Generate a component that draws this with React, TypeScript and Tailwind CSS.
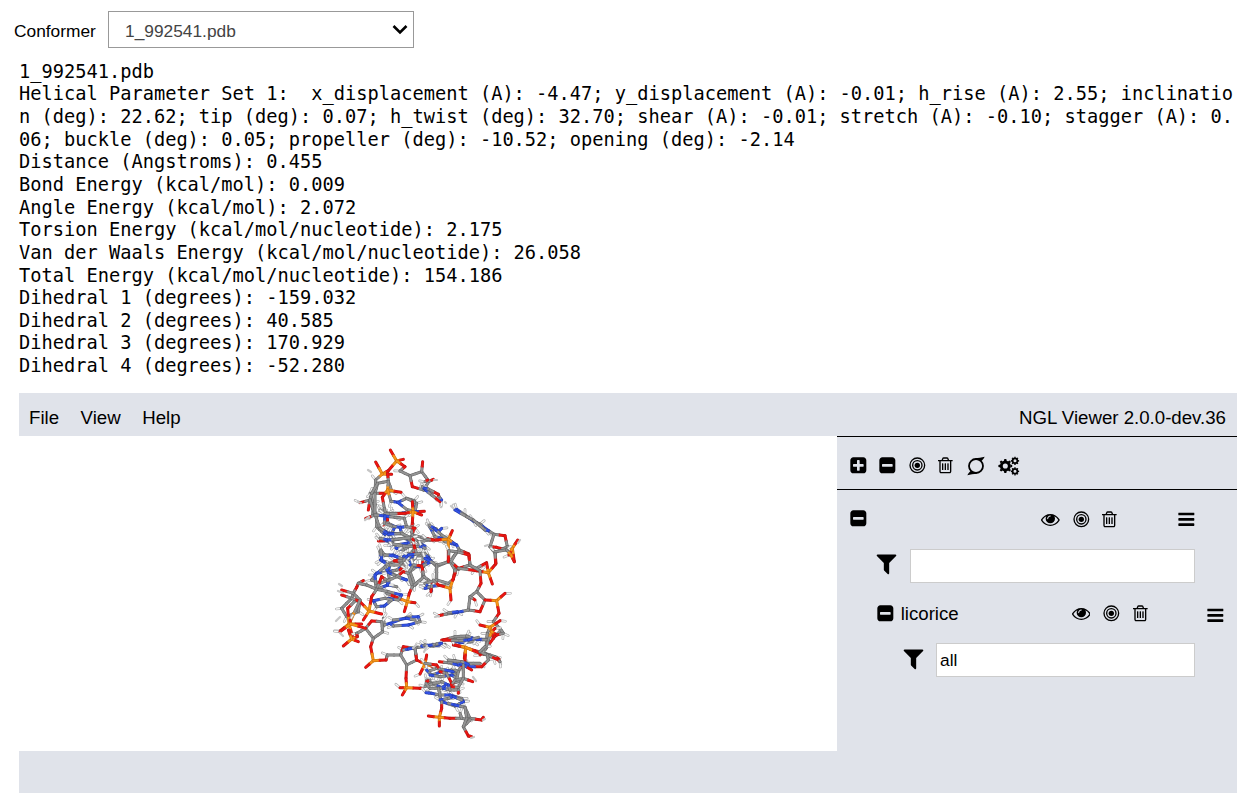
import type { ReactNode } from "react";

type Atom = { e: string; x: number; y: number };
type Group = { ox: number; oy: number; chains: string };

// Stick model fragments: each chain is a run of bonded atoms, three units per pixel.
const GROUPS: Group[] = [
  { ox: 360, oy: 490, chains: `C50,110 C65,125 N75,133 C95,130 N105,110 C85,100 C75,75;N85,133 C100,150 C95,160 N90,165;O55,153 C80,152 C100,150 C130,145 N150,150 C155,165 C130,180 N110,175 C80,152;C130,145 C155,140 C175,155 N195,170;C155,140 O162,115;N155,165 C185,165 C200,190 N210,210;C175,155 C210,150 O240,150;C60,185 N62,210 C90,220 C120,205 N100,195 C75,195 C60,185;C90,220 N85,245 C110,240 N125,230;C120,205 N150,218 C165,205 C145,190 N130,200;O103,212 C130,218 N155,200 C180,195 N205,208 C190,230 N160,225;C150,245 C170,230 O187,230 C188,265 C165,285 C150,245;C190,200 O187,230;C35,270 N50,250 C85,245 C88,268 C60,280 C35,270;C85,245 C115,260 N140,270;C88,268 N85,285 C110,290;O120,240 C140,215 C160,180 O165,195;C30,40 C50,75 C50,110;C70,75 C95,70 C120,70 N135,68;C30,10 C40,40 C38,75;C60,60 C85,70 O70,105` },
  { ox: 325, oy: 530, chains: `C165,-4 N195,10 C235,12 C258,35 N245,40 C210,45 N190,32 O165,32;N190,32 C205,42 C235,48 C270,50 N300,48;C258,-4 C262,15 C290,22 O325,30;C262,15 O268,50 C275,70;C168,60 C178,75 N210,78 C235,88 C225,105 C190,105 N170,92 C168,60;O207,92 C235,92 N250,75 C290,70 C310,95 N285,110 N255,105;C300,70 N318,95 C290,110;C250,130 C265,105 O290,108 C297,140 C262,170 C250,130;C297,140 C310,150 O325,160;N300,175 C315,172 N320,182;C262,170 O253,190 P247,215;P247,215 O205,198 C185,190;P247,215 O238,245;P247,215 O270,218;N150,135 C180,110 N190,127 C215,140 N245,150;N188,165 C155,178 C152,160 N150,135;C155,178 O170,140 C188,152 N188,165;C188,152 C215,140 O235,125 C250,130;C155,178 C190,185 N230,195 C220,210 N190,205;N145,212 C155,230 N178,228 C200,210 C180,205 N145,212;O115,152 C100,160 O95,172 C85,190 C80,205 C50,235 C65,260 C100,245 C105,210 C85,190;O50,180 C85,190;C100,160 C125,165 C155,178;O50,195 C80,205 O105,215 P132,243;P132,243 O140,200 C155,178;P132,243 O170,252;P132,243 O115,270;P72,282 O68,235 C88,215;P72,282 O110,282;P72,282 O45,303;P72,282 C105,210;P72,282 O82,318;C175,265 C178,285 N195,280 C245,262 N280,260 C285,275 N250,285 C205,288 N195,280;C205,270 N245,265 C270,270` },
  { ox: 325, oy: 440, chains: `O196,30 P215,63 O190,92 P172,102;P215,63 O235,58;P215,63 O240,80 C225,93 C255,107;C255,107 C290,95 C312,124 C296,150 O262,140 C255,107;C290,95 O293,65;C312,124 O325,118;C296,150 N310,152 C330,165;O152,66 P172,102 O200,103;P172,102 C152,120 C150,160 O178,160 C200,152 C190,124 C158,130 C150,160;C190,124 O188,100;P188,150 O228,157;P188,150 C190,124;P188,150 O172,172 C178,205 O188,240;P188,150 C198,184 N218,187;O105,188 C135,180 C140,160 C158,130;C135,180 O130,210;C135,180 C150,225 O122,235;C150,160 C150,225 C165,265 C195,285;N218,187 C245,175 C268,182 N270,215 C245,208 N218,187;C245,175 C275,190 C270,215;N270,215 O298,214;P264,215 O262,185;P264,215 O240,220 C190,222 C178,222;P264,215 O290,225;P264,215 O262,250 C260,265;C150,225 N180,228 C210,232 C238,235 C245,260 N225,262 C200,258 C178,250 N180,228;O270,265 C245,260;C165,265 N190,283 C230,280 N225,262;C230,280 C260,295;C165,295 N190,300 C210,298 C260,293 O265,300;N320,262 C335,267` },
  { ox: 425, oy: 440, chains: `C-8,140 N0,148 C20,165 O45,185;C0,125 O8,120;N50,180 C42,170 O40,163 C10,147 N0,145;N95,208 C120,225 N145,243 C165,252 N180,265 C207,283;N90,210 C125,230 C145,240 C180,270 N190,272;C207,283 O240,287 C247,320 C210,338 C195,320 C207,283;C195,320 O215,322 C247,330;C210,338 O213,370;C247,320 P262,325 O278,300;P262,325 O268,365;P262,325 O252,345;N15,262 C30,290 N50,295 C60,305 N95,315;N50,265 N40,275 C15,262;C12,255 N28,265 C50,285 C80,305;P70,298 O82,272;P70,298 O25,300 C5,298;P70,298 O70,365;P70,298 N95,315 C103,330 O131,342 C135,375 C100,388 C75,362 C103,330;O185,368 C150,387 C135,375;C0,340 N10,355 C35,380 C75,362;N-10,320 C0,325` },
  { ox: 425, oy: 550, chains: `N0,25 C35,45 C75,35 C90,60 O85,88 C70,100 C35,90 C35,45;C35,90 C0,100 N10,110 C60,105;N0,115 C20,108 O18,125;C78,35 O100,55 C135,45 O132,15 C95,5 C78,35;C95,5 C72,2 O70,35;P190,68 O212,42 C210,5 C245,0 P258,15 O268,35;P190,68 O202,102;P190,68 O185,40;P190,68 O155,62 C100,55;C135,45 C165,62 O168,100 C155,125 C180,150 O165,185 C130,180 C135,140 C155,125;P215,152 O240,130;P215,152 O180,150;P215,152 O222,190 C205,215 C228,240;P75,115 O90,70 C90,60;P75,115 O78,150;P75,115 O40,105 C25,90;C130,180 N97,187 C65,192 O42,197;C70,188 N97,185;O150,150 C135,140;P195,232 O165,225;P195,232 O225,212;P195,232 O205,265 C228,240 C235,250;P195,232 C187,250 C185,268;O50,270 C90,268 C125,262 N150,268 C185,268;C85,275 N100,275 C130,272 C150,267;C90,268 N105,278 C145,275;P122,293 O85,285;P122,293 O118,325;P122,293 O150,302 C180,310 C210,320 O222,327;C185,268 C183,295 O205,265;C183,295 O165,315;N0,290 C25,288 N40,285 C60,283;C180,310 C205,325` },
  { ox: 330, oy: 620, chains: `C107,25 O125,3 C155,5 C158,35 C130,55 C107,25;C107,25 C80,40 O82,50 P65,57;P62,12 O60,0;P62,12 O30,35;P62,12 O107,25;P65,57 O40,78;P65,57 O85,65;P65,57 O55,30;C130,55 O122,80 P130,122 O107,142;P130,122 O168,120 C172,105 C212,105;C212,105 O220,80 C255,85 C260,120 C230,135 C212,105;C220,90 N235,87 C265,82 N285,77 C305,76 N330,73;C230,135 O228,175 P230,203 O210,203;P230,203 O217,225;P230,203 O270,205 C290,195;P285,132 O260,120 C255,85;P285,132 O290,105;P285,132 O270,162;P285,132 O325,145 C340,155` },
  { ox: 400, oy: 630, chains: `O130,30 C165,20 C200,18 N230,28 C265,30 C255,60;O130,30 C180,32 N205,30 C235,22;N65,48 C75,45 N90,46 C110,42 N125,40;P197,52 O165,45;P197,52 O195,95 C170,130;P197,52 O240,70 C262,75 O295,90 C300,95;C262,75 C240,65 C255,50;C265,30 P275,5 O285,-5;P275,5 O290,15 C310,10;C262,75 C265,90 O245,110 N205,110;O118,95 C145,98 N175,105 C200,100 C240,100;C145,98 C165,92 N190,105 O215,120;C145,90 C185,95 N205,103;N80,120 C95,135 N125,125 C155,120 C170,140;N90,135 C120,140 N155,135 C170,145;C90,122 C110,115 N160,125;C120,120 O110,105 C75,100;O120,125 C140,130 O155,160 C175,155;C165,120 C175,125 C170,150 C190,145 O218,155;C190,145 C190,105;C190,145 C175,172 O150,170 C165,150;C80,150 C95,160 N130,175 C150,180 C175,180 O175,190;C75,170 C100,160 C125,155 N145,165 C150,180;C90,150 O80,155;C78,160 C90,175 C120,175 N135,168;N78,188 N95,190 C120,195 N150,195 C185,205 N190,215 C165,228 N125,215 C118,195;C115,175 C120,195;N120,210 C145,205 N160,200 C185,210;C145,220 N165,225 C195,232;C125,215 O125,235 P118,262 O85,258;P118,262 O118,288;P118,262 O150,265 C185,265;C195,232 C210,265 O245,270 O250,262;C185,265 C210,270 C190,290 O205,318 O215,320;C195,232 C200,265 C190,290;C185,265 C180,250` },
];

const COLORS: Record<string, string> = { C: "#949494", N: "#3252e6", O: "#ee1511", P: "#f8961a" };
const SHADES: Record<string, string> = { C: "#666666", N: "#233aa8", O: "#b51613", P: "#c8720f" };

const mix = (a: Atom, b: Atom) => ({ x: (a.x + b.x) / 2, y: (a.y + b.y) / 2 });

function parse(group: Group): Atom[][] {
  return group.chains.split(";").map((chain) =>
    chain.trim().split(/\s+/).map((t) => {
      const [x, y] = t.slice(1).split(",").map(Number);
      return { e: t[0], x: group.ox + x / 3, y: group.oy + y / 3 };
    }),
  );
}

function buildSticks(group: Group) {
  const links: [Atom, Atom][] = [];
  const near = new Map<string, { atom: Atom; to: Atom[] }>();
  const touch = (a: Atom, b: Atom) => {
    const key = `${a.x},${a.y}`;
    if (!near.has(key)) near.set(key, { atom: a, to: [] });
    near.get(key)!.to.push(b);
  };
  parse(group).forEach((chain) =>
    chain.slice(1).forEach((b, i) => {
      links.push([chain[i], b]);
      touch(chain[i], b);
      touch(b, chain[i]);
    }),
  );
  const hydrogens: [Atom, { x: number; y: number }][] = [];
  near.forEach(({ atom, to }) => {
    if (atom.e === "P" || to.length > 2 || (atom.e === "O" && to.length > 1)) return;
    if (atom.e === "O" && Math.round(atom.x * 3) % 3 !== 0) return;
    const cx = to.reduce((s, t) => s + t.x, 0) / to.length;
    const cy = to.reduce((s, t) => s + t.y, 0) / to.length;
    const angle = Math.atan2(atom.y - cy, atom.x - cx) + (to.length === 1 ? 0.7 : 0);
    hydrogens.push([atom, { x: atom.x + Math.cos(angle) * 5.4, y: atom.y + Math.sin(angle) * 5.4 }]);
  });
  return { links, hydrogens };
}

function Molecule() {
  return (
    <svg className="block h-[315px] w-[818px]" viewBox="19 436 818 315" fill="none" strokeLinecap="round">
      {GROUPS.map((group, g) => {
        const { links, hydrogens } = buildSticks(group);
        return (
          <g key={g}>
            {hydrogens.map(([a, h], i) => (
              <g key={i}>
                <path d={`M${a.x} ${a.y}L${h.x} ${h.y}`} stroke="#a8a8a8" strokeWidth="2.6" />
                <path d={`M${a.x} ${a.y}L${h.x} ${h.y}`} stroke="#f8f8f8" strokeWidth="1.4" />
              </g>
            ))}
            {links.map(([a, b], i) => {
              const m = mix(a, b);
              const first = `M${a.x} ${a.y}L${m.x} ${m.y}`;
              const second = `M${m.x} ${m.y}L${b.x} ${b.y}`;
              return (
                <g key={i}>
                  <path d={first} stroke={SHADES[a.e]} strokeWidth="3" />
                  <path d={second} stroke={SHADES[b.e]} strokeWidth="3" />
                  <path d={first} stroke={COLORS[a.e]} strokeWidth="1.9" />
                  <path d={second} stroke={COLORS[b.e]} strokeWidth="1.9" />
                </g>
              );
            })}
          </g>
        );
      })}
      <g stroke="#c6c6c6" strokeWidth="2.2">
        <path d="M445 502l1 1M451 506l2 2M434 480h3M485 546l3-1M361 503l-3-1M338 591l5 2M336 621l4-4M435 617l4-1M483 720l2-1M340 633l3 3" />
        <path d="M413 648l3-3M424 652l3-6M476 681l-3-4M365 520l4-3M518 543l2-3M371 472l-3-2M342 586l-3-2M471 738l3-1" />
      </g>
    </svg>
  );
}

const SQUARE =
  "m256-544v960q0 119-84.5 203.5t-203.5 84.5h-960q-119 0-203.5-84.5t-84.5-203.5v-960q0-119 84.5-203.5t203.5-84.5h960q119 0 203.5 84.5t84.5 203.5z";

function Glyph({ children, large = false }: { children: ReactNode; large?: boolean }) {
  return (
    <svg viewBox="0 0 1792 1792" fill="#000" className={large ? "block h-[25px] w-[25px] shrink-0" : "block h-[18.67px] w-[18.67px] shrink-0"}>
      {children}
    </svg>
  );
}

const Plus = () => (
  <Glyph>
    <path d={`M1408 960v-128q0-26-19-45t-45-19h-320v-320q0-26-19-45t-45-19h-128q-26 0-45 19t-19 45v320h-320q-26 0-45 19t-19 45v128q0 26 19 45t45 19h320v320q0 26 19 45t45 19h128q26 0 45-19t19-45v-320h320q26 0 45-19t19-45z${SQUARE}`} />
  </Glyph>
);
const Minus = () => (
  <Glyph>
    <path d={`M1408 960v-128q0-26-19-45t-45-19h-896q-26 0-45 19t-19 45v128q0 26 19 45t45 19h896q26 0 45-19t19-45z${SQUARE}`} />
  </Glyph>
);
const Target = () => (
  <Glyph>
    <circle cx="896" cy="896" r="256" />
    <circle cx="896" cy="896" r="448" fill="none" stroke="#000" strokeWidth="128" />
    <circle cx="896" cy="896" r="704" fill="none" stroke="#000" strokeWidth="128" />
  </Glyph>
);
const Trash = () => (
  <Glyph>
    <path d="M704 736v576q0 14-9 23t-23 9h-64q-14 0-23-9t-9-23v-576q0-14 9-23t23-9h64q14 0 23 9t9 23zm256 0v576q0 14-9 23t-23 9h-64q-14 0-23-9t-9-23v-576q0-14 9-23t23-9h64q14 0 23 9t9 23zm256 0v576q0 14-9 23t-23 9h-64q-14 0-23-9t-9-23v-576q0-14 9-23t23-9h64q14 0 23 9t9 23zm128 724v-948h-896v948q0 22 7 40.5t14.5 27 10.5 8.5h832q3 0 10.5-8.5t14.5-27 7-40.5zm-672-1076h448l-48-117q-7-9-17-11h-317q-10 2-17 11zm928 32v64q0 14-9 23t-23 9h-96v948q0 83-47 143.5t-113 60.5h-832q-66 0-113-58.5t-47-141.5v-952h-96q-14 0-23-9t-9-23v-64q0-14 9-23t23-9h309l70-167q15-37 54-63t79-26h320q40 0 79 26t54 63l70 167h309q14 0 23 9t9 23z" />
  </Glyph>
);
const Eye = () => (
  <Glyph>
    <path d="M1664 960q-152-236-381-353 61 104 61 225 0 185-131.5 316.5t-316.5 131.5-316.5-131.5-131.5-316.5q0-121 61-225-229 117-381 353 133 205 333.5 326.5t434.5 121.5 434.5-121.5 333.5-326.5zm-720-384q0-20-14-34t-34-14q-125 0-214.5 89.5t-89.5 214.5q0 20 14 34t34 14 34-14 14-34q0-86 61-147t147-61q20 0 34-14t14-34zm848 384q0 34-20 69-140 230-376.5 368.5t-499.5 138.5-499.5-139-376.5-368q-20-35-20-69t20-69q140-229 376.5-368t499.5-139 499.5 139 376.5 368q20 35 20 69z" />
  </Glyph>
);
const Bars = () => (
  <Glyph>
    <path d="M1664 1344v128q0 26-19 45t-45 19h-1408q-26 0-45-19t-19-45v-128q0-26 19-45t45-19h1408q26 0 45 19t19 45zm0-512v128q0 26-19 45t-45 19h-1408q-26 0-45-19t-19-45v-128q0-26 19-45t45-19h1408q26 0 45 19t19 45zm0-512v128q0 26-19 45t-45 19h-1408q-26 0-45-19t-19-45v-128q0-26 19-45t45-19h1408q26 0 45 19t19 45z" />
  </Glyph>
);
const Filter = () => (
  <Glyph large>
    <path d="M1595 295q17 41-14 70l-493 493v742q0 42-39 59-13 5-25 5-27 0-45-19l-256-256q-19-19-19-45v-486l-493-493q-31-29-14-70 17-39 59-39h1280q42 0 59 39z" />
  </Glyph>
);
const Orbit = () => (
  <svg viewBox="0 0 20 20" className="block h-5 w-5 shrink-0">
    <circle cx="10" cy="10" r="7" fill="none" stroke="#000" strokeWidth="1.8" />
    <path d="M9 2.2Q14 2 18.7.7L17.5 2.7 16.2 4.3 15 5.2 11 3.4ZM11 17.8Q6 18 1.3 19.3L2.5 17.3 3.8 15.7 5 14.8 9 16.6Z" />
  </svg>
);
const Gear = ({ x, y, s }: { x: number; y: number; s: number }) => (
  <g transform={`translate(${x} ${y}) scale(${s})`}>
    <circle r="4" fill="none" stroke="#000" strokeWidth="2.9" />
    {[0, 45, 90, 135, 180, 225, 270, 315].map((r) => (
      <path key={r} d="M-1.4-5L-1-6.9H1L1.4-5Z" transform={`rotate(${r})`} />
    ))}
  </g>
);
const Gears = () => (
  <svg viewBox="0 0 22 20" className="block h-5 w-[22px] shrink-0">
    <Gear x={7.3} y={10} s={1} />
    <Gear x={17} y={4.8} s={0.6} />
    <Gear x={17} y={15.3} s={0.6} />
  </svg>
);

const REPORT = [
  "1_992541.pdb",
  "Helical Parameter Set 1:  x_displacement (A): -4.47; y_displacement (A): -0.01; h_rise (A): 2.55; inclinatio",
  "n (deg): 22.62; tip (deg): 0.07; h_twist (deg): 32.70; shear (A): -0.01; stretch (A): -0.10; stagger (A): 0.",
  "06; buckle (deg): 0.05; propeller (deg): -10.52; opening (deg): -2.14",
  "Distance (Angstroms): 0.455",
  "Bond Energy (kcal/mol): 0.009",
  "Angle Energy (kcal/mol): 2.072",
  "Torsion Energy (kcal/mol/nucleotide): 2.175",
  "Van der Waals Energy (kcal/mol/nucleotide): 26.058",
  "Total Energy (kcal/mol/nucleotide): 154.186",
  "Dihedral 1 (degrees): -159.032",
  "Dihedral 2 (degrees): 40.585",
  "Dihedral 3 (degrees): 170.929",
  "Dihedral 4 (degrees): -52.280",
].join("\n");

export default function App() {
  return (
    <div className="h-[802px] w-[1251px] overflow-hidden bg-white font-['Liberation_Sans',sans-serif] text-[18.67px] text-black">
      <div className="flex h-12 items-end pl-3.5">
        <label className="mb-[7px] w-[94px] text-[17.33px] leading-5">Conformer</label>
        <button className="flex h-[37px] w-[306px] items-center justify-between border border-[#999] bg-white pr-[5px] pl-4 text-[17.33px] text-[#444]">
          <span className="pt-[3px] leading-5">1_992541.pdb</span>
          <svg viewBox="0 0 16 12" className="h-3 w-4" fill="none" stroke="#000" strokeWidth="2.6">
            <path d="M1.5 2L8 8.5 14.5 2" />
          </svg>
        </button>
      </div>
      <pre className="h-[345px] pt-[12.6px] pl-[19px] font-['DejaVu_Sans_Mono',monospace] text-[18.68px] leading-[22.66px]">{REPORT}</pre>
      <div className="ml-[19px] h-[400px] w-[1218px] bg-[#e0e3ea]">
        <div className="flex h-[43px] items-center justify-between pt-[7px] pr-[11px] pl-2.5">
          <div className="flex gap-[21.5px]">
            <span>File</span>
            <span>View</span>
            <span>Help</span>
          </div>
          <span>NGL Viewer 2.0.0-dev.36</span>
        </div>
        <div className="flex h-[315px]">
          <div className="w-[818px] bg-white">
            <Molecule />
          </div>
          <div className="w-[400px]">
            <div className="flex h-[54px] items-center border-y border-black pt-[5px] pl-[11.7px]">
              <Plus />
              <div className="ml-[10.6px]"><Minus /></div>
              <div className="ml-[11px]"><Target /></div>
              <div className="ml-[10px]"><Trash /></div>
              <div className="ml-[10.7px]"><Orbit /></div>
              <div className="ml-[12px]"><Gears /></div>
            </div>
            <div className="flex h-[59px] items-center pb-[1px] pl-[11.7px]">
              <div className="mb-0.5"><Minus /></div>
              <div className="ml-[173.5px]"><Eye /></div>
              <div className="ml-3"><Target /></div>
              <div className="ml-[10.3px]"><Trash /></div>
              <div className="mt-px ml-[57.4px]"><Bars /></div>
            </div>
            <div className="flex h-[34px] items-center pl-[37px]">
              <div className="mb-[5px]"><Filter /></div>
              <input aria-label="Structure selection" className="ml-[11px] h-[34px] w-[285px] border border-[#ccc] bg-white px-1 text-[17.33px]" />
            </div>
            <div className="flex h-[60px] items-center pl-[38.5px]">
              <Minus />
              <span className="mt-0.5 ml-[6.5px] w-[115px] leading-6">licorice</span>
              <div className="ml-[56px]"><Eye /></div>
              <div className="ml-3"><Target /></div>
              <div className="ml-[10.3px]"><Trash /></div>
              <div className="mt-1 ml-[56px]"><Bars /></div>
            </div>
            <div className="flex h-[34px] items-center pl-[63.5px]">
              <div className="mb-[3px]"><Filter /></div>
              <input aria-label="Representation selection" defaultValue="all" className="ml-[10.5px] h-[34px] w-[259px] border border-[#ccc] bg-white px-[3px] text-[17.33px]" />
            </div>
          </div>
        </div>
      </div>
    </div>
  );
}
